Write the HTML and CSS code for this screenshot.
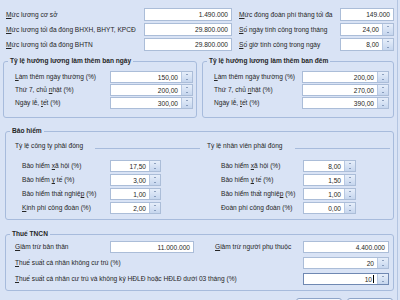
FILE: index.html
```html
<!DOCTYPE html>
<html lang="vi">
<head>
    <meta charset="UTF-8">
    <title>Thiết lập lương</title>
    <link rel="stylesheet" href="styles.css">
</head>
<body>
    <div class="form">
        <div class="top">
            <label class="lbl"><u>M</u>ức lương cơ sở</label>
            <div class="box"><span class="val">1.490.000</span></div>
            <label class="lbl lbl-r"><u>M</u>ức đóng đoàn phí tháng tối đa</label>
            <div class="box"><span class="val">149.000</span></div>

            <label class="lbl"><u>M</u>ức lương tối đa đóng BHXH, BHYT, KPCĐ</label>
            <div class="box"><span class="val">29.800.000</span></div>
            <label class="lbl lbl-r"><u>S</u>ố ngày tính công trong tháng</label>
            <div class="box"><span class="val">24,00</span><span class="spin"><i class="up"></i><i class="down"></i></span></div>

            <label class="lbl"><u>M</u>ức lương tối đa đóng BHTN</label>
            <div class="box"><span class="val">29.800.000</span></div>
            <label class="lbl lbl-r"><u>S</u>ố giờ tính công trong ngày</label>
            <div class="box"><span class="val">8,00</span><span class="spin"><i class="up"></i><i class="down"></i></span></div>
        </div>

        <div class="pair">
            <fieldset class="group group-day">
                <legend>Tỷ lệ hưởng lương làm thêm ban ngày</legend>
                <div class="rows">
                    <label class="lbl"><u>L</u>àm thêm ngày thường (%)</label>
                    <div class="box"><span class="val">150,00</span><span class="spin"><i class="up"></i><i class="down"></i></span></div>
                    <label class="lbl">Thứ 7, chủ <u>n</u>hật (%)</label>
                    <div class="box"><span class="val">200,00</span><span class="spin"><i class="up"></i><i class="down"></i></span></div>
                    <label class="lbl">Ngày lễ, <u>t</u>ết (%)</label>
                    <div class="box"><span class="val">300,00</span><span class="spin"><i class="up"></i><i class="down"></i></span></div>
                </div>
            </fieldset>
            <fieldset class="group group-night">
                <legend>Tỷ lệ hưởng lương làm thêm ban đêm</legend>
                <div class="rows">
                    <label class="lbl"><u>L</u>àm thêm ngày thường (%)</label>
                    <div class="box"><span class="val">200,00</span><span class="spin"><i class="up"></i><i class="down"></i></span></div>
                    <label class="lbl">Thứ 7, chủ <u>n</u>hật (%)</label>
                    <div class="box"><span class="val">270,00</span><span class="spin"><i class="up"></i><i class="down"></i></span></div>
                    <label class="lbl">Ngày lễ, <u>t</u>ết (%)</label>
                    <div class="box"><span class="val">390,00</span><span class="spin"><i class="up"></i><i class="down"></i></span></div>
                </div>
            </fieldset>
        </div>

        <fieldset class="group group-ins">
            <legend>Bảo hiểm</legend>
            <div class="cols">
                <div class="col col-l">
                    <div class="sub"><span>Tỷ lệ công ty phải đóng</span><span class="rule"></span></div>
                    <div class="rows">
                        <label class="lbl">Bảo hiểm <u>x</u>ã hội (%)</label>
                        <div class="box"><span class="val">17,50</span><span class="spin"><i class="up"></i><i class="down"></i></span></div>
                        <label class="lbl">Bảo hiểm <u>y</u> tế (%)</label>
                        <div class="box"><span class="val">3,00</span><span class="spin"><i class="up"></i><i class="down"></i></span></div>
                        <label class="lbl">Bảo hiểm thất nghiệ<u>p</u> (%)</label>
                        <div class="box"><span class="val">1,00</span><span class="spin"><i class="up"></i><i class="down"></i></span></div>
                        <label class="lbl"><u>K</u>inh phí công đoàn (%)</label>
                        <div class="box"><span class="val">2,00</span><span class="spin"><i class="up"></i><i class="down"></i></span></div>
                    </div>
                </div>
                <div class="col col-r">
                    <div class="sub"><span>Tỷ lệ nhân viên phải đóng</span><span class="rule"></span></div>
                    <div class="rows">
                        <label class="lbl">Bảo hiểm <u>x</u>ã hội (%)</label>
                        <div class="box"><span class="val">8,00</span><span class="spin"><i class="up"></i><i class="down"></i></span></div>
                        <label class="lbl">Bảo hiểm <u>y</u> tế (%)</label>
                        <div class="box"><span class="val">1,50</span><span class="spin"><i class="up"></i><i class="down"></i></span></div>
                        <label class="lbl">Bảo hiểm thất nghiệ<u>p</u> (%)</label>
                        <div class="box"><span class="val">1,00</span><span class="spin"><i class="up"></i><i class="down"></i></span></div>
                        <label class="lbl">Đoàn phí công đoàn (%)</label>
                        <div class="box"><span class="val">0,00</span><span class="spin"><i class="up"></i><i class="down"></i></span></div>
                    </div>
                </div>
            </div>
        </fieldset>

        <fieldset class="group group-tax">
            <legend>Thuế TNCN</legend>
            <div class="tax">
                <label class="lbl"><u>G</u>iảm trừ bản thân</label>
                <div class="box"><span class="val">11.000.000</span></div>
                <label class="lbl lbl-r"><u>G</u>iảm trừ người phụ thuộc</label>
                <div class="box"><span class="val">4.400.000</span></div>

                <label class="lbl span3"><u>T</u>huế suất cá nhân không cư trú (%)</label>
                <div class="box"><span class="val">20</span><span class="spin"><i class="up"></i><i class="down"></i></span></div>

                <label class="lbl span3"><u>T</u>huế suất cá nhân cư trú và không ký HĐLĐ hoặc HĐLĐ dưới 03 tháng (%)</label>
                <div class="box focus"><span class="val">10<span class="caret"></span></span><span class="spin"><i class="up"></i><i class="down"></i></span></div>
            </div>
        </fieldset>

        <div class="buttons">
            <button class="btn" aria-label="Đồng ý"></button>
            <button class="btn" aria-label="Hủy bỏ"></button>
        </div>
    </div>
</body>
</html>
```

FILE: styles.css
```css
body {
    margin: 0;
    width: 400px;
    height: 300px;
    overflow: hidden;
    background-color: #d9e3f5;
    font-family: "Liberation Sans", Arial, sans-serif;
    font-size: 6.6px;
    color: #262626;
}
.form {
    box-sizing: border-box;
    width: 398px;
    height: 300px;
    overflow: hidden;
    padding: 8px 0 0 3px;
    border-right: 1px solid #b4c5e1;
}
.lbl {
    display: block;
    align-self: center;
    white-space: nowrap;
    line-height: 8px;
}
.lbl-r {
    padding-left: 7px;
}
.box {
    box-sizing: border-box;
    height: 12px;
    display: flex;
    align-items: center;
    justify-content: flex-end;
    background-color: #fff;
    border: 1px solid #abbdd8;
}
.box .val {
    padding-right: 3px;
    display: flex;
    align-items: center;
}
.box.focus {
    border-color: #6f88b2;
}
.caret {
    width: 1px;
    height: 8px;
    background-color: #000;
    margin-left: 1px;
}
.spin {
    width: 10px;
    align-self: stretch;
    display: flex;
    flex-direction: column;
    border-left: 1px solid #b7c8e2;
    background: linear-gradient(#e6eefa, #c6d6ee);
}
.spin i {
    flex: 1;
    display: flex;
    align-items: center;
    justify-content: center;
}
.spin i::after {
    content: "";
    width: 0;
    height: 0;
    border-left: 1px solid transparent;
    border-right: 1px solid transparent;
}
.spin .up::after {
    border-bottom: 1px solid #3f5b88;
}
.spin .down::after {
    border-top: 1px solid #3f5b88;
}

.top {
    margin-left: 3px;
    display: grid;
    grid-template-columns: 138px 88px 108px 54px;
    grid-auto-rows: 13px;
    row-gap: 2px;
}
.top .box {
    height: 13px;
}

.group {
    margin: 0;
    min-width: 0;
    border: 1px solid #a7bbdc;
    border-radius: 3px;
    padding: 0;
}
.group legend {
    margin-left: 4px;
    padding: 0 2px;
    font-weight: bold;
    line-height: 8px;
}
.rows {
    display: grid;
    grid-auto-rows: 12px;
}

.pair {
    display: flex;
    gap: 5px;
    margin-top: 6px;
}
.group-day .rows {
    grid-template-columns: 95px 83px;
    row-gap: 1px;
    padding: 6px 3px 8px 11px;
}
.group-night .rows {
    grid-template-columns: 88px 87px;
    row-gap: 1px;
    padding: 6px 4px 8px 11px;
}

.group-ins {
    margin: 9px 0 0 2px;
    width: 389px;
    box-sizing: border-box;
}
.cols {
    display: flex;
    padding: 7px 0 5px;
}
.col-l {
    width: 194px;
}
.col-r {
    flex: 1;
}
.sub {
    display: flex;
    align-items: center;
    line-height: 8px;
    white-space: nowrap;
}
.col-l .sub {
    padding-left: 9px;
}
.col-r .sub {
    padding-left: 7px;
    padding-right: 3px;
}
.rule {
    flex: 1;
    height: 1px;
    margin: 4px 0 0 12px;
    background-color: #a7bbdc;
}
.col .rows {
    margin-top: 10px;
    row-gap: 2px;
}
.col-l .rows {
    grid-template-columns: 88px 51px;
    padding-left: 16px;
}
.col-r .rows {
    grid-template-columns: 82px 53px;
    padding-left: 21px;
}

.group-tax {
    margin: 10px 0 0 2px;
    width: 389px;
    box-sizing: border-box;
}
.tax {
    display: grid;
    grid-template-columns: 95px 84px 109px 86px;
    grid-auto-rows: 12px;
    row-gap: 4px;
    padding: 3px 0 5px 9px;
}
.tax .lbl-r {
    padding-left: 21px;
}
.span3 {
    grid-column: 1 / 4;
}

.buttons {
    display: flex;
    justify-content: flex-end;
    gap: 5px;
    margin-top: 7px;
    padding-right: 4px;
}
.btn {
    width: 46px;
    height: 20px;
    border: 1px solid #8ea5c9;
    border-radius: 3px;
    background: linear-gradient(#f4f7fc, #d6e1f2);
}
```
